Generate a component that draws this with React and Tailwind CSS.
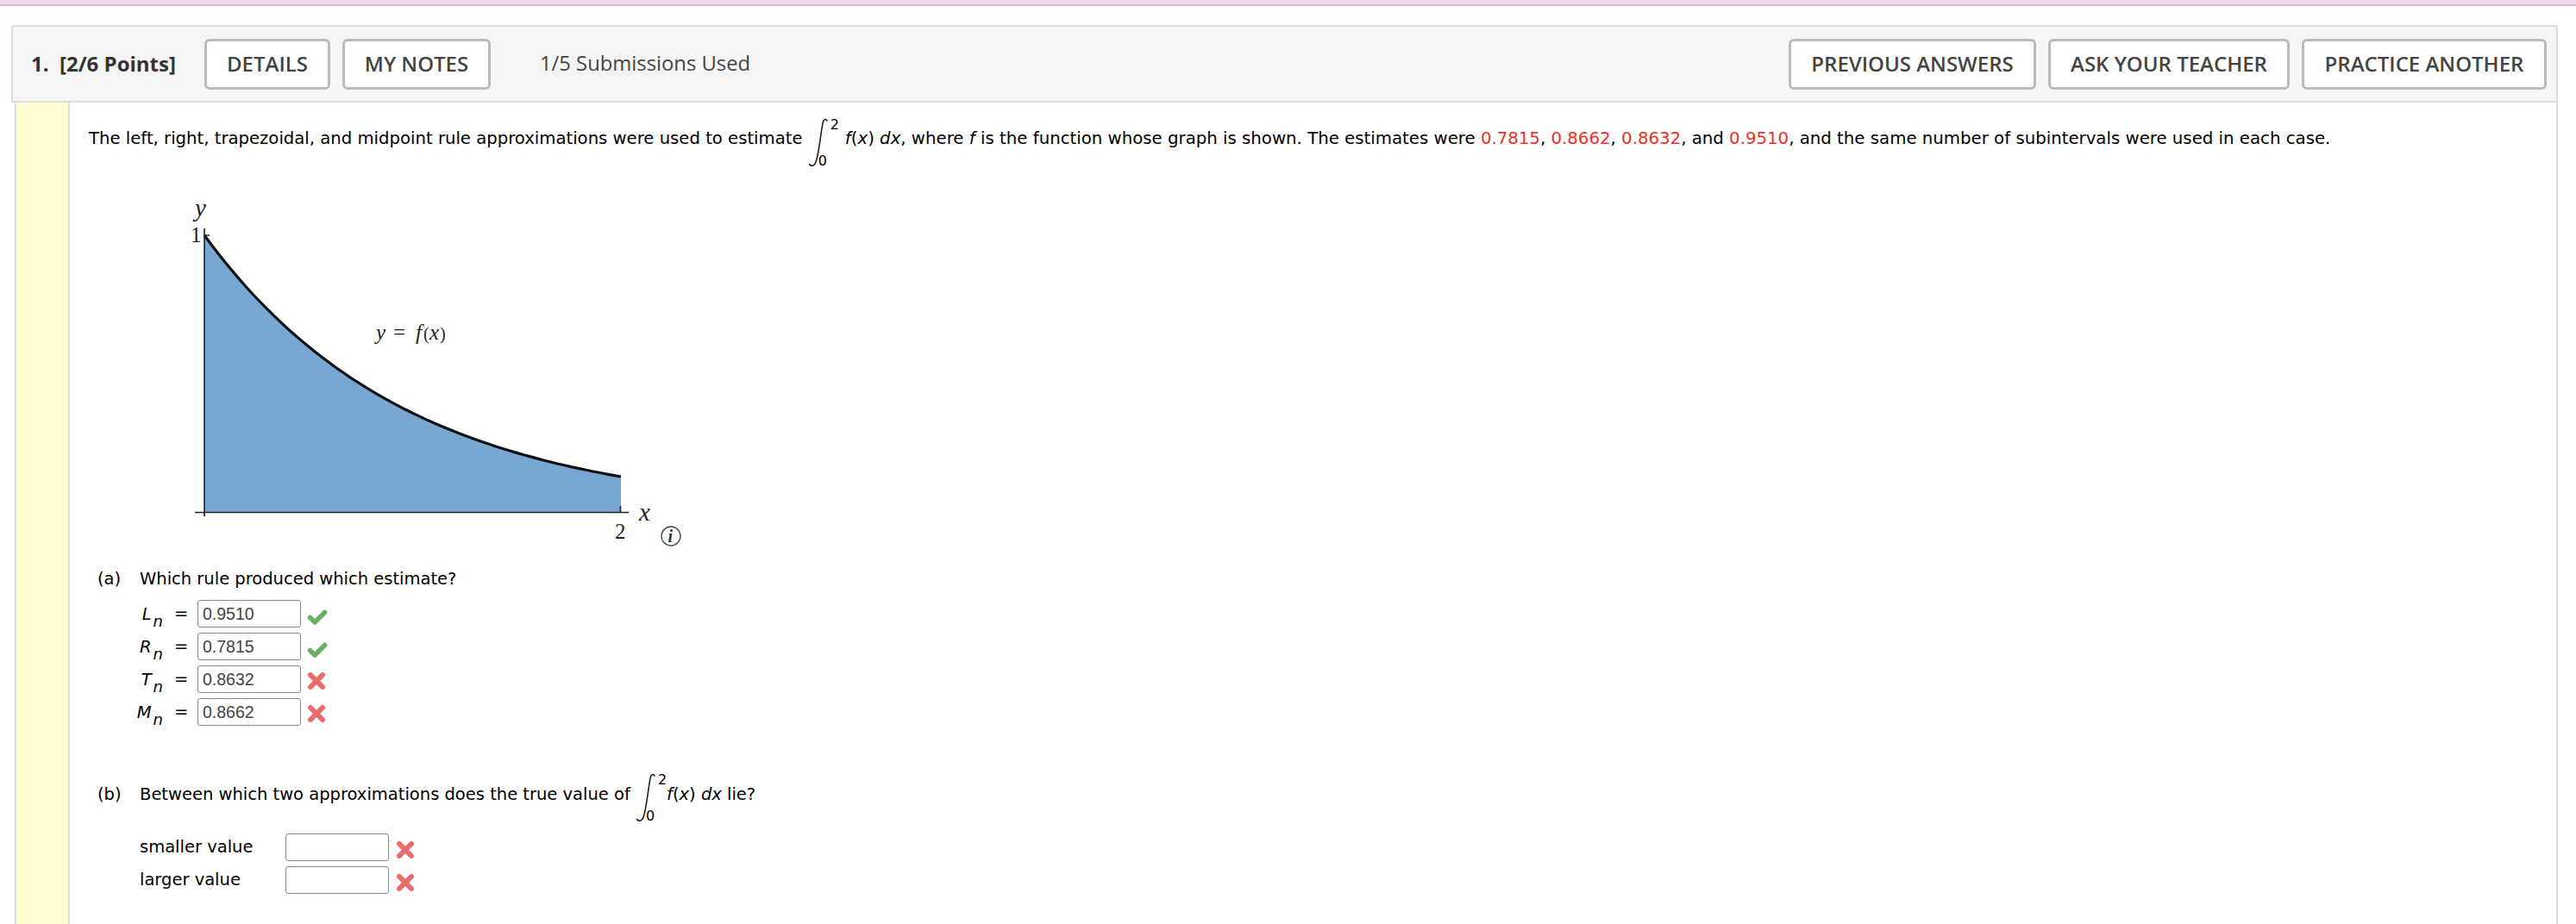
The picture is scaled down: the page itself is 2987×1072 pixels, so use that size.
import React from 'react';

const Integral = ({ width = 'w-[43px]' }) => (
    <span className={`relative top-[4px] inline-block h-[58px] align-middle ${width}`}>
        <svg className="absolute left-0 top-0" width="24" height="58" viewBox="0 0 24 58" fill="none">
            <path d="M22 3C20.500 .8 18.500 1 17.500 4C16 9 15 20 13 32C11.500 42 10 50 8 53C6 56 3 56 1.500 53.500" stroke="#222" strokeWidth="1.6" strokeLinecap="round" />
        </svg>
        <span className="absolute left-[26px] top-[-1px] text-[16px] leading-[18px]">2</span>
        <span className="absolute left-[12px] bottom-[-1px] text-[16px] leading-[18px]">0</span>
    </span>
);

const Check = () => (
    <svg width="24" height="20" viewBox="0 0 24 20" className="block">
        <path d="M3.500 10.500L9 16L20.500 4.500" fill="none" stroke="#6aae63" strokeWidth="5.500" strokeLinecap="round" strokeLinejoin="round" />
    </svg>
);

const Cross = () => (
    <svg width="22" height="22" viewBox="0 0 22 22" className="block">
        <path d="M4 4L18 18M18 4L4 18" fill="none" stroke="#e96b6b" strokeWidth="6" strokeLinecap="round" />
    </svg>
);

const HeaderButton = ({ children, className = '' }) => (
    <button className={`h-[59px] bg-white border-[3px] border-[#bbbbbb] rounded-[6px] font-semibold text-[#444444] text-[24px] whitespace-nowrap ${className}`}>
        {children}
    </button>
);

const AnswerBox = ({ value }) => (
    <div className="w-[120px] h-[32px] px-[5px] bg-white border border-[#888888] rounded-[3px] font-['Liberation_Sans',sans-serif] text-[19.5px] leading-[30px] text-[#444444]">
        {value}
    </div>
);

const rules = [
    { letter: 'L', value: '0.9510', ok: true },
    { letter: 'R', value: '0.7815', ok: true },
    { letter: 'T', value: '0.8632', ok: false },
    { letter: 'M', value: '0.8662', ok: false },
];

// the curve in the picture is a plain exponential decay
const curve = Array.from({ length: 61 }, (_, i) => {
    const x = (i / 60) * 483;
    return `${(57 + x).toFixed(1)} ${(374 - 321 * Math.exp(-0.00426 * x)).toFixed(1)}`;
});

const Graph = () => (
    <svg width="640" height="440" viewBox="0 0 640 440" className="block">
        <path d={`M${curve.join('L')}L540 374L57 374Z`} fill="#77a7d2" />
        <path d={`M${curve.join('L')}`} fill="none" stroke="#111" strokeWidth="3.2" />
        <path d="M57 45V379M46 374.500H549M539.500 374V367M57 53H63" fill="none" stroke="#222" strokeWidth="1.6" />
        <g fontFamily="'Liberation Serif', serif" fill="#222">
            <text x="46" y="31" fontSize="29" fontStyle="italic">y</text>
            <text x="41" y="61" fontSize="25">1</text>
            <text x="256" y="174" fontSize="25" fontStyle="italic">y</text>
            <text x="276" y="174" fontSize="25">=</text>
            <text x="302" y="174" fontSize="25" fontStyle="italic">f</text>
            <text x="311" y="174" fontSize="20">(</text>
            <text x="318" y="174" fontSize="25" fontStyle="italic">x</text>
            <text x="330" y="174" fontSize="20">)</text>
            <text x="561" y="384" fontSize="29" fontStyle="italic">x</text>
            <text x="533" y="405" fontSize="25">2</text>
        </g>
        <circle cx="598" cy="402" r="11" fill="#fff" stroke="#444" strokeWidth="1.3" />
        <text x="594.500" y="409" fontFamily="'Liberation Serif', serif" fontSize="20" fontWeight="bold" fontStyle="italic" fill="#333">i</text>
    </svg>
);

export default function App() {
    return (
        <div className="h-[1072px] overflow-hidden bg-white font-['DejaVu_Sans',sans-serif] text-black">
            <div className="h-[7px] bg-[#eedaee] border-b-2 border-[#d2b9d2]" />
            <div className="pt-[22px] pl-[13px] pr-[21px]">
                {/* header bar */}
                <div className="h-[90px] flex items-center justify-between pl-[21px] pr-[11px] bg-[#f5f5f5] border-2 border-[#dddddd] rounded-t-[3px] font-['Open_Sans',sans-serif]">
                    <div className="flex items-center">
                        <span className="font-bold text-[24px] text-[#333333] w-[201px]">1.&nbsp; [2/6 Points]</span>
                        <HeaderButton className="w-[146px]">DETAILS</HeaderButton>
                        <HeaderButton className="ml-[14px] w-[172px]">MY NOTES</HeaderButton>
                        <span className="ml-[57px] text-[23.8px] text-[#444444]">1/5 Submissions Used</span>
                    </div>
                    <div className="flex items-center gap-[14px]">
                        <HeaderButton className="w-[287px]">PREVIOUS ANSWERS</HeaderButton>
                        <HeaderButton className="w-[280px]">ASK YOUR TEACHER</HeaderButton>
                        <HeaderButton className="w-[284px]">PRACTICE ANOTHER</HeaderButton>
                    </div>
                </div>

                {/* question body */}
                <div className="flex ml-[4px] h-[960px] border-r-2 border-[#dddddd]">
                    <div className="w-[64px] shrink-0 bg-[#ffffd0] border-x-2 border-[#dddddd]" />
                    <div className="pl-[22px] pt-[13px] flex-1 text-[19.5px]">
                        <p className="h-[58px] leading-[58px] whitespace-nowrap text-[19.74px]">
                            <span className="text-[19.65px]">The left, right, trapezoidal, and midpoint rule approximations were used to estimate </span><Integral /><i>f</i>(<i>x</i>) <i>dx</i>, where <i>f</i> is the function whose graph is shown. The estimates were <span className="text-[#ee3124]">0.7815</span>, <span className="text-[#ee3124]">0.8662</span>, <span className="text-[#ee3124]">0.8632</span>, and <span className="text-[#ee3124]">0.9510</span>, and the same number of subintervals were used in each case.
                        </p>
                        <div className="mt-[30px] ml-[77px]"><Graph /></div>

                        {/* part a */}
                        <div className="flex pl-[10px] leading-[24px]">
                            <span className="w-[49px]">(a)</span>
                            <span>Which rule produced which estimate?</span>
                        </div>
                        <div className="mt-[12px] flex flex-col gap-[6px]">
                            {rules.map(r => (
                                <div key={r.letter} className="flex items-center">
                                    <span className="relative top-[1px] w-[86px] text-right leading-[24px]">
                                        <i>{r.letter}</i>
                                        <i className="relative top-[8px] ml-[2px] text-[18px]">n</i>
                                    </span>
                                    <span className="ml-[13px] w-[27px]">=</span>
                                    <AnswerBox value={r.value} />
                                    {r.ok
                                        ? <span className="ml-[7px] mt-[8px]"><Check /></span>
                                        : <span className="ml-[7px] mt-[4px]"><Cross /></span>}
                                </div>
                            ))}
                        </div>

                        {/* part b */}
                        <div className="flex items-center pl-[10px] mt-[51px] h-[58px] whitespace-pre">
                            <span className="w-[49px]">(b)</span>
                            <span>Between which two approximations does the true value of <Integral width="w-[36px]" /><i>f</i>(<i>x</i>) <i>dx</i> lie?</span>
                        </div>
                        <div className="mt-[16px] pl-[59px] flex flex-col gap-[6px]">
                            {['smaller value', 'larger value'].map(label => (
                                <div key={label} className="flex items-center">
                                    <span className="w-[169px]">{label}</span>
                                    <AnswerBox value="" />
                                    <span className="ml-[8px] mt-[6px]"><Cross /></span>
                                </div>
                            ))}
                        </div>
                    </div>
                </div>
            </div>
        </div>
    );
}
